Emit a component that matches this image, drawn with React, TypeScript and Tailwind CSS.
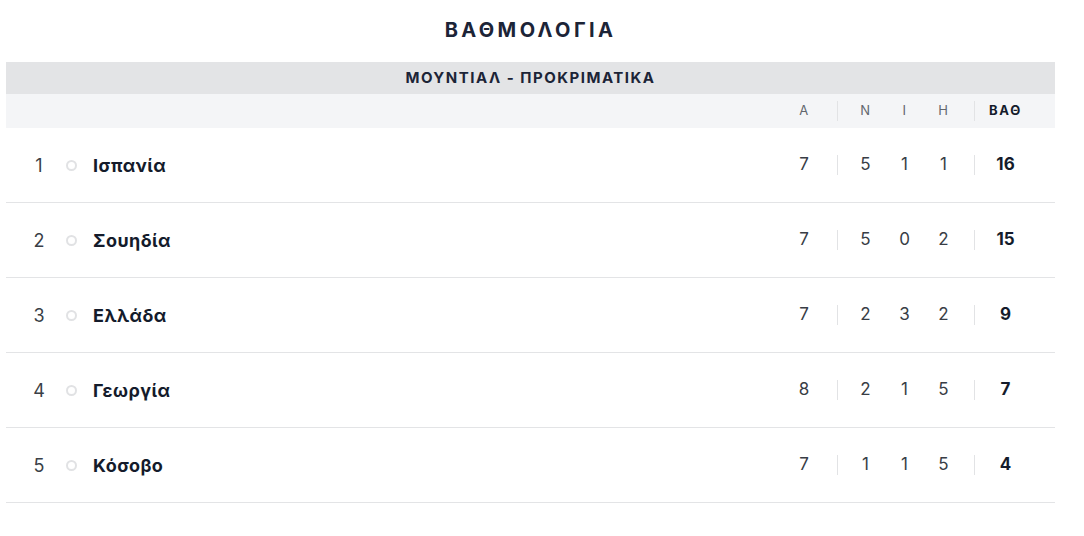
const rows = [
  { pos: 1, name: "Ισπανία", p: 7, w: 5, d: 1, l: 1, pts: 16 },
  { pos: 2, name: "Σουηδία", p: 7, w: 5, d: 0, l: 2, pts: 15 },
  { pos: 3, name: "Ελλάδα", p: 7, w: 2, d: 3, l: 2, pts: 9 },
  { pos: 4, name: "Γεωργία", p: 8, w: 2, d: 1, l: 5, pts: 7 },
  { pos: 5, name: "Κόσοβο", p: 7, w: 1, d: 1, l: 5, pts: 4 },
]

function Stats({ a, n, i, h, pts, head }: { a: any; n: any; i: any; h: any; pts: any; head?: boolean }) {
  const cell = head ? "text-[13px] text-[#62666d] tracking-wider" : "text-[17px] text-[#383d45]"
  return (
    <div className="ml-auto flex items-center pr-[19px]">
      <div className={`w-[40px] text-center ${cell}`}>{a}</div>
      <div className="ml-[13px] w-px h-5 bg-[#e2e3e5]" />
      <div className={`ml-[8px] w-[39px] text-center ${cell}`}>{n}</div>
      <div className={`w-[39px] text-center ${cell}`}>{i}</div>
      <div className={`w-[39px] text-center ${cell}`}>{h}</div>
      <div className="ml-[11px] w-px h-5 bg-[#e2e3e5]" />
      <div
        className={`w-[61px] text-center font-bold text-[#141b2b] ${head ? "text-[13px] tracking-[0.14em]" : "text-[17px]"}`}
      >
        {pts}
      </div>
    </div>
  )
}

export default function App() {
  return (
    <div className="w-[1084px] h-[536px] bg-white px-[6px] pt-[18px]" style={{ fontFamily: "Inter, 'Noto Sans', sans-serif" }}>
      <div className="w-[1049px]">
        <h1 className="text-center text-[20px] font-bold tracking-[0.17em] text-[#1c2437] leading-[24px] h-[44px]">
          ΒΑΘΜΟΛΟΓΙΑ
        </h1>

        {/* Competition band */}
        <div className="h-[32px] bg-[#e3e4e6] flex items-center justify-center text-[15px] font-bold tracking-[0.1em] text-[#1c2437]">
          ΜΟΥΝΤΙΑΛ - ΠΡΟΚΡΙΜΑΤΙΚΑ
        </div>

        {/* Column header */}
        <div className="h-[34px] bg-[#f4f5f7] flex items-center">
          <Stats a="A" n="N" i="I" h="H" pts="ΒΑΘ" head />
        </div>

        {rows.map((r) => (
          <div key={r.pos} className="h-[75px] flex items-center border-b border-[#e3e4e6]">
            <div className="ml-[21px] w-[24px] text-center text-[18px] text-[#3a3f47]">{r.pos}</div>
            <div className="ml-[15px] w-[11px] h-[11px] rounded-full border-[2.5px] border-[#e1e2e4]" />
            <div className="ml-[16px] text-[18px] font-bold text-[#141b2b] tracking-wide">{r.name}</div>
            <Stats a={r.p} n={r.w} i={r.d} h={r.l} pts={r.pts} />
          </div>
        ))}
      </div>
    </div>
  )
}
